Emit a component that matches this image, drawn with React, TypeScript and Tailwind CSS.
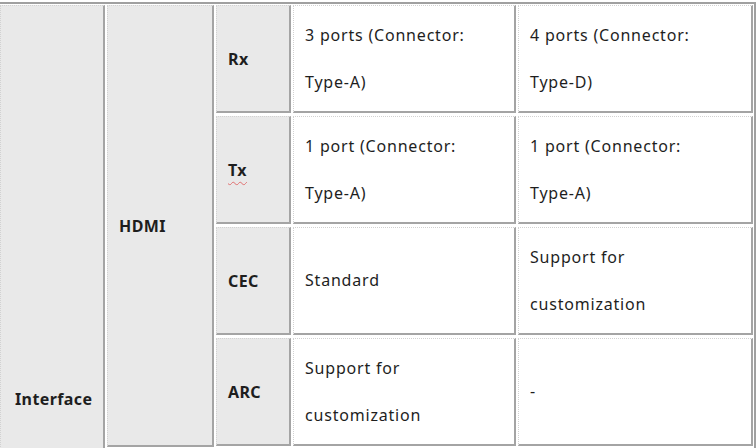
const cell =
  'border-t border-l border-r-2 border-b-2 border-t-[#d2d2d2] border-l-[#d2d2d2] border-r-[#a4a4a4] border-b-[#a4a4a4] [border-top-style:dotted] [border-left-style:dotted] flex items-center'

const head = `${cell} bg-[#e9e9e9] font-bold pl-[11px]`
const data = `${cell} bg-white pl-[11px] pr-2 leading-[47px] tracking-[0.8px]`

const rows = [
  { label: 'Rx', a: ['3 ports (Connector:', 'Type-A)'], b: ['4 ports (Connector:', 'Type-D)'] },
  { label: 'Tx', a: ['1 port (Connector:', 'Type-A)'], b: ['1 port (Connector:', 'Type-A)'], spell: true },
  { label: 'CEC', a: ['Standard'], b: ['Support for', 'customization'] },
  { label: 'ARC', a: ['Support for', 'customization'], b: ['-'] },
]

function Lines({ lines }: { lines: string[] }) {
  return (
    <div className="flex flex-col">
      {lines.map((l) => (
        <span key={l}>{l}</span>
      ))}
    </div>
  )
}

export default function App() {
  return (
    <div className="h-[448px] w-[756px] overflow-hidden bg-white text-[16px] text-[#1e1e1e]" style={{ fontFamily: '"Noto Sans", "Open Sans", sans-serif' }}>
      <div className="mt-[2px] -ml-[4px] w-[760px] border-t-2 border-l-2 border-r-2 border-[#a0a0a0] pt-[1px] pl-[2px] pr-[1px] flex items-start gap-[2px]">
        <div className={`${head} w-[105px] h-[788px] pl-[14px] shrink-0 tracking-[0.4px]`}>Interface</div>
        <div className={`${head} w-[107px] h-[442px] shrink-0 tracking-[0.4px]`}>HDMI</div>
        <div className="grid grid-cols-[75px_223px_235px] grid-rows-[108px_108px_108px_108px] gap-x-[2px] gap-y-[3px]">
          {rows.map((r) => (
            <div key={r.label} className="contents">
              <div className={`${head} tracking-[0.4px]`}>
                <span className={r.spell ? 'underline decoration-wavy decoration-[#e07070] decoration-1 underline-offset-[5px]' : ''}>{r.label}</span>
              </div>
              <div className={data}>
                <Lines lines={r.a} />
              </div>
              <div className={data}>
                <Lines lines={r.b} />
              </div>
            </div>
          ))}
        </div>
      </div>
    </div>
  )
}
